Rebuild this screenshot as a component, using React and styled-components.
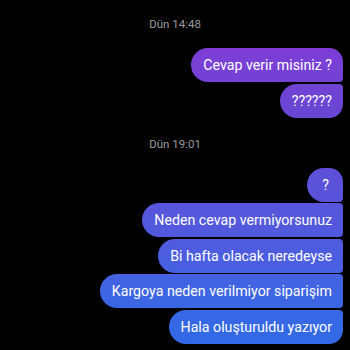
import styled, { createGlobalStyle } from "styled-components";

const Global = createGlobalStyle`
  html, body {
    margin: 0;
    padding: 0;
    background: #000;
  }
  body {
    font-family: Roboto, "Noto Sans", "Liberation Sans", sans-serif;
  }
`;

const groups = [
  {
    time: "Dün 14:48",
    messages: ["Cevap verir misiniz ?", "??????"],
  },
  {
    time: "Dün 19:01",
    messages: [
      "?",
      "Neden cevap vermiyorsunuz",
      "Bi hafta olacak neredeyse",
      "Kargoya neden verilmiyor siparişim",
      "Hala oluşturuldu yazıyor",
    ],
  },
];

const App = () => {
  return (
    <>
      <Global />
      <Screen>
        {groups.map((g) => (
          <Section key={g.time}>
            <Stamp>{g.time}</Stamp>
            <Thread>
              {g.messages.map((m, i) => (
                <Bubble
                  key={m}
                  $first={i === 0}
                  $last={i === g.messages.length - 1}
                >
                  {m}
                </Bubble>
              ))}
            </Thread>
          </Section>
        ))}
      </Screen>
    </>
  );
};

export default App;

const Screen = styled.div`
  width: 350px;
  height: 350px;
  overflow: hidden;
  background: #000;
  box-sizing: border-box;
  padding: 16px 7px 0 7px;
  display: flex;
  flex-direction: column;
  gap: 18px;
`;

const Section = styled.div`
  display: flex;
  flex-direction: column;
  gap: 16px;
`;

const Stamp = styled.div`
  text-align: center;
  color: #9b9b9b;
  font-size: 11.5px;
  line-height: 16px;
`;

const Thread = styled.div`
  display: flex;
  flex-direction: column;
  align-items: flex-end;
  gap: 1.5px;
`;

const Bubble = styled.div`
  box-sizing: border-box;
  min-width: 36px;
  height: 34px;
  text-align: center;
  padding: 7px 11px 7px 12px;
  font-size: 14.2px;
  line-height: 20px;
  color: #fff;
  white-space: nowrap;
  border-radius: 17px ${(p) => (p.$first ? "14px" : "4px")}
    ${(p) => (p.$last ? "14px" : "4px")} 17px;
  background: linear-gradient(
    180deg,
    #8a36d8 0px,
    #7a3fd6 60px,
    #6c44d3 100px,
    #5b52d9 185px,
    #4c5de0 255px,
    #3e65e3 292px,
    #3469e6 330px
  );
  background-attachment: fixed;
`;
